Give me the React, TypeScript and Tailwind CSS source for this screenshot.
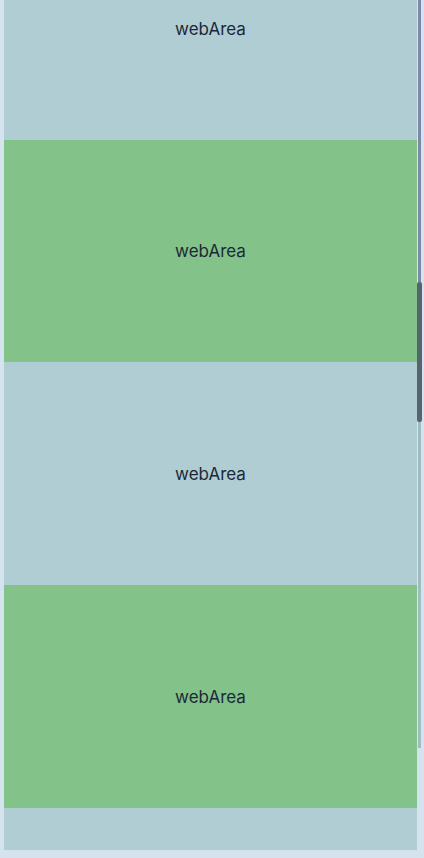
import React from 'react';

const blocks = [
  { color: 'bg-[#b0cdd3]', height: 'h-[140px]', textPad: 'pt-[17px] items-start' },
  { color: 'bg-[#83c389]', height: 'h-[222px]', textPad: 'items-center' },
  { color: 'bg-[#b0cdd3]', height: 'h-[223px]', textPad: 'items-center' },
  { color: 'bg-[#83c389]', height: 'h-[223px]', textPad: 'items-center' },
];

const WebArea: React.FC<{ color: string; height: string; textPad: string }> = ({ color, height, textPad }) => (
  <div className={`${color} ${height} ${textPad} w-full flex justify-center`}>
    <span className="text-[17px] leading-[24px] text-[#1c2838]" style={{ fontFamily: 'Inter, "Noto Sans", sans-serif' }}>
      webArea
    </span>
  </div>
);

export default function App() {
  return (
    <div className="relative w-[424px] h-[858px] overflow-hidden bg-[#d5e3ee]">
      <div className="ml-[4px] w-[413px] flex flex-col">
        {blocks.map((b, i) => (
          <WebArea key={i} {...b} />
        ))}
        <div className="bg-[#b0cdd3] h-[42px] w-full" />
      </div>
      {/* scrollbar overlay */}
      <div className="absolute left-[418px] top-0 w-[3px] h-[282px] bg-[#7d8aa5]" />
      <div className="absolute left-[418px] top-[422px] w-[3px] h-[326px] bg-[#9fbdbe]" />
      <div className="absolute left-[417px] top-[282px] w-[5px] h-[140px] rounded-[2px] bg-[#56646e]" />
    </div>
  );
}
